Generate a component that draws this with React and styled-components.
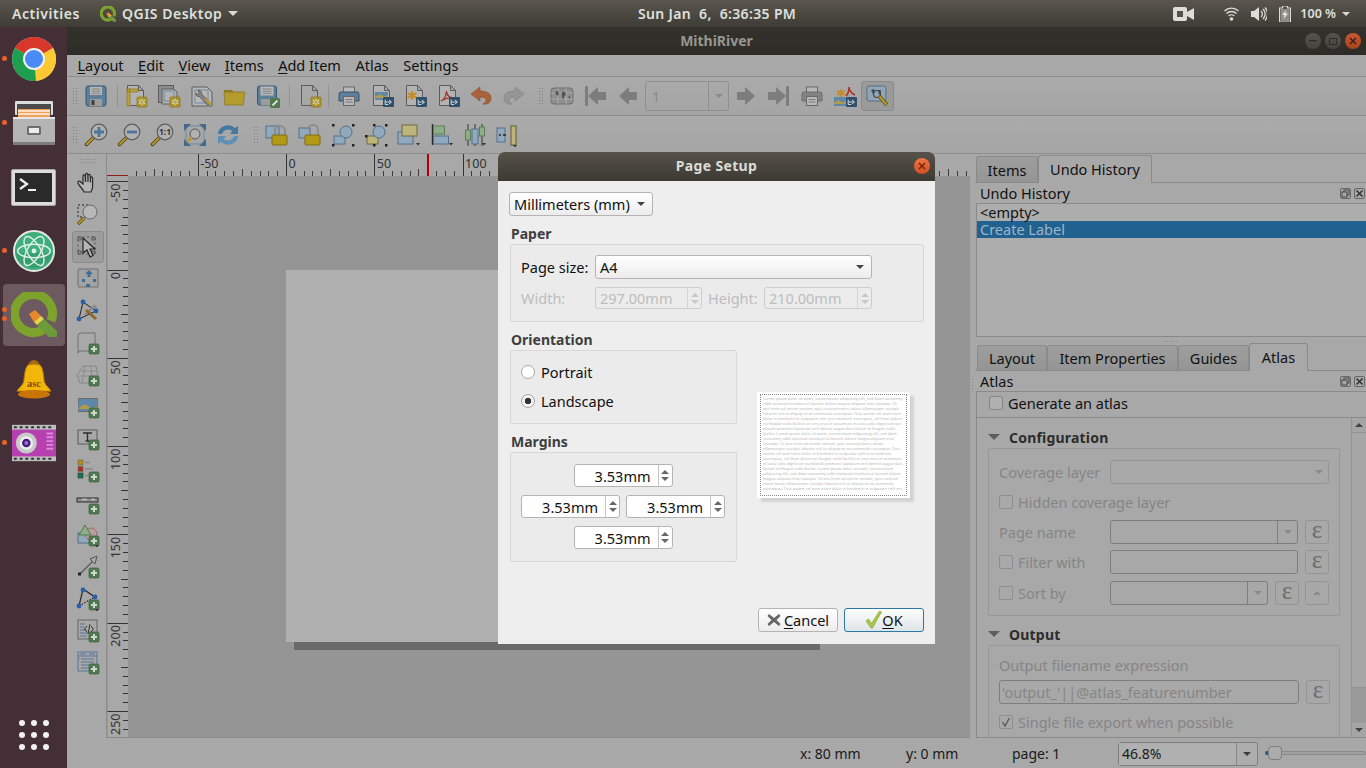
import React from 'react';
import styled, { createGlobalStyle } from 'styled-components';

const Global = createGlobalStyle`
  html, body { margin: 0; padding: 0; width: 1366px; height: 768px; overflow: hidden; background: #452f37; }
  * { box-sizing: border-box; }
  body { font-family: "Noto Sans", "DejaVu Sans", sans-serif; font-size: 14px; }
`;

const Desktop = styled.div`position: relative; width: 1366px; height: 768px; overflow: hidden; display: flex; flex-direction: column;`;

/* ---------- gnome top bar ---------- */
const TopBar = styled.header`
  height: 27px; flex: none; display: grid; grid-template-columns: 638px auto 1fr; align-items: center;
  background: linear-gradient(#5a564e, #3e3c36); color: #dfe0de; font-size: 14px; font-weight: 600; letter-spacing: .35px;
`;
const TopLeft = styled.div`display: flex; align-items: center; padding-left: 12px;`;
const Activities = styled.span`width: 88px; letter-spacing: .55px;`;
const AppName = styled.span`margin-left: 6px; letter-spacing: .5px;`;
const TopRight = styled.div`display: flex; align-items: center; justify-content: flex-end; padding-right: 16px;`;
const BatteryText = styled.span`font-size: 12.5px; letter-spacing: 0;`;
const Caret = styled.i`
  display: inline-block; width: 0; height: 0; flex: none;
  border-left: ${p => p.$s || 4}px solid transparent; border-right: ${p => p.$s || 4}px solid transparent;
  border-top: ${p => p.$s || 4}px solid ${p => p.$c || '#444'};
  margin-left: ${p => p.$ml || 0}px;
`;
const UpCaret = styled(Caret)`border-top: 0; border-bottom: ${p => p.$s || 4}px solid ${p => p.$c || '#444'};`;

/* ---------- dock ---------- */
const Row = styled.div`flex: 1; display: flex; min-height: 0;`;
const Dock = styled.nav`width: 67px; flex: none; background: #452f37; display: flex; flex-direction: column; position: relative;`;
const DockItem = styled.div`height: 64px; flex: none; display: flex; align-items: center; justify-content: center; position: relative;`;
const ActiveTile = styled.div`width: 62px; height: 62px; border-radius: 4px; background: #6c5a60; display: flex; align-items: center; justify-content: center;`;
const RunDot = styled.b`position: absolute; left: 2px; width: 5px; height: 5px; border-radius: 50%; background: #e8622c; top: ${p => p.$t}px;`;
const AppsGrid = styled.div`margin-top: auto; margin-bottom: 18px; align-self: center; display: grid; grid-template-columns: repeat(3, 6px); gap: 6px;`;
const AppsDot = styled.span`width: 6px; height: 6px; border-radius: 50%; background: #f4f2f2;`;

/* ---------- window ---------- */
const Window = styled.main`flex: 1; display: flex; flex-direction: column; min-width: 0; background: #a8a8a8; color: #1a1a1a;`;
const TitleBar = styled.div`
  height: 28px; flex: none; background: linear-gradient(#33312c, #2e2c27); position: relative; padding-bottom: 2px;
  display: flex; align-items: center; justify-content: center; color: #97968f; font-weight: 700; font-size: 14px;
`;
const WinControls = styled.div`position: absolute; right: 5px; top: 6px; display: flex; gap: 4px;`;
const WinBtn = styled.span`
  width: 16px; height: 16px; border-radius: 50%; display: flex; align-items: center; justify-content: center;
  background: ${p => p.$close ? 'linear-gradient(#c8572e,#a8431f)' : 'linear-gradient(#55534d,#45433e)'};
`;
const MenuBar = styled.div`height: 22px; flex: none; display: flex; align-items: center; padding-left: 10.5px; gap: 14.5px; border-bottom: 1px solid #8d8d8d; font-size: 14.5px; color: #111; padding-bottom: 1px;`;
const MenuItem = styled.span``;
const U = styled.span`text-decoration: underline; text-underline-offset: 2px;`;
const ToolBar = styled.div`height: ${p => p.$h}px; flex: none; display: flex; align-items: center; padding-left: 5px; border-bottom: 1px solid #8d8d8d; background: linear-gradient(#aaa, #a5a5a5);`;
const Grip = styled.div`width: 5px; height: 18px; margin: 0 ${p => p.$mr ?? 2.5}px 0 ${p => p.$ml || 0}px; flex: none; background-image: radial-gradient(#7f7f7f 0.7px, transparent 0.8px); background-size: 3px 3px;`;
const Sep = styled.div`width: 1px; height: 22px; background: #929292; margin: 0 ${p => p.$r}px 0 ${p => p.$l}px; flex: none;`;
const ToolBtn = styled.div`
  width: 33px; height: ${p => p.$active ? 30 : 33}px; flex: none; display: flex; align-items: center; justify-content: center;
  ${p => p.$active ? 'border: 1px solid #8a8a8a; border-radius: 3px; background: #9a9a9a;' : ''}
`;
const PageCombo = styled.div`width: 84px; height: 30px; flex: none; margin-left: 1px; display: flex; border: 1px solid #8f8f8f; border-radius: 3px; color: #8a8a8a; font-size: 14px; align-items: center;`;
const PageComboText = styled.span`flex: 1; padding-left: 6px; height: 100%; display: flex; align-items: center; border-right: 1px solid #8f8f8f;`;
const PageComboArrow = styled.span`width: 19px; display: flex; justify-content: center;`;

const Main = styled.div`flex: 1; display: flex; min-height: 0;`;
const ToolColumn = styled.aside`width: 40px; flex: none; border-right: 1px solid #8c8c8c; display: flex; flex-direction: column; align-items: center; padding: 4px 0 0 2px;`;
const GripH = styled.div`width: 18px; height: 5px; margin-bottom: 4px; flex: none; background-image: radial-gradient(#7f7f7f 0.7px, transparent 0.8px); background-size: 3px 3px;`;
const ColBtn = styled.div`
  width: 32px; height: 32px; flex: none; display: flex; align-items: center; justify-content: center;
  ${p => p.$active ? 'border: 1px solid #8a8a8a; border-radius: 3px; background: #9c9c9c;' : ''}
`;
const CanvasArea = styled.section`width: 863px; flex: none; display: flex; flex-direction: column; border-bottom: 1px solid #8c8c8c;`;
const RulerRow = styled.div`height: 22px; flex: none; display: block; line-height: 0;`;
const CanvasRow = styled.div`flex: 1; display: flex; min-height: 0;`;
const VRulerBox = styled.div`width: 21px; flex: none; line-height: 0;`;
const View = styled.div`flex: 1; background: #959595; position: relative; overflow: hidden;`;
const Paper = styled.div`position: absolute; left: 158px; top: 94px; width: 526px; height: 372px; background: #b0b0b0; box-shadow: 8px 8px 0 #6a6a6a;`;
const Splitter = styled.div`width: 5px; flex: none; display: flex; align-items: center; justify-content: center;`;
const GripV = styled.div`width: 3px; height: 16px; margin-top: -120px; background-image: radial-gradient(#878787 0.6px, transparent 0.7px); background-size: 3px 3px;`;

/* ---------- right panel ---------- */
const RightPanel = styled.aside`width: 391px; flex: none; display: flex; flex-direction: column; font-size: 14.5px; color: #111;`;
const TabBar = styled.div`height: ${p => p.$h}px; flex: none; display: flex; align-items: flex-end; padding-left: ${p => p.$pl}px; border-bottom: 1px solid #8a8a8a;`;
const Tab = styled.div`
  height: ${p => p.$active ? p.$h + 2 : p.$h}px; width: ${p => p.$w}px; flex: none; display: flex; align-items: center; justify-content: center;
  border: 1px solid #8a8a8a; border-bottom: 0; border-radius: 3px 3px 0 0;
  background: ${p => p.$active ? '#a8a8a8' : 'linear-gradient(#9e9e9e,#959595)'};
  margin-bottom: ${p => p.$active ? -1 : 0}px; padding-bottom: ${p => p.$active ? 2 : 0}px;
  position: relative;
`;
const DockTitle = styled.div`height: 20px; flex: none; display: flex; align-items: center; padding: 0 1px 0 5px; justify-content: space-between;`;
const DockBtns = styled.div`display: flex; gap: 3px;`;
const DockBtn = styled.span`width: 11px; height: 11px; border: 1px solid #666; border-radius: 2px; display: flex; align-items: center; justify-content: center; line-height: 0;`;
const ListBox = styled.div`height: 134px; flex: none; margin-left: 1px; border: 1px solid #8a8a8a; border-right: 0; background: #adadad; font-size: 14.5px; line-height: 17px;`;
const ListRow = styled.div`height: 17px; padding-left: 3px; ${p => p.$sel ? 'background: #21618f; color: #9db5c7;' : ''}`;
const HSplit = styled.div`height: 8px; flex: none; display: flex; justify-content: center; align-items: center;`;
const GripTiny = styled.div`width: 16px; height: 3px; background-image: radial-gradient(#878787 0.6px, transparent 0.7px); background-size: 3px 3px;`;
const AtlasBox = styled.div`flex: 1; min-height: 0; margin-left: 1px; border: 1px solid #8a8a8a; display: flex; flex-direction: column; border-right: 0;`;
const GenRow = styled.div`height: 26px; flex: none; display: flex; align-items: center; padding: 0 0 3px 12px; gap: 5px; border-bottom: 1px solid #8a8a8a; font-size: 14.5px;`;
const Check = styled.span`width: 14px; height: 14px; flex: none; border: 1px solid ${p => p.$dis ? '#8f8f8f' : '#868686'}; border-radius: 2px; background: ${p => p.$dis ? 'transparent' : '#b0b0b0'}; display: flex; align-items: center; justify-content: center; line-height: 0;`;
const ScrollRow = styled.div`flex: 1; display: flex; min-height: 0; overflow: hidden;`;
const ScrollContent = styled.div`flex: 1; padding: 9px 11px 0 11px; min-width: 0; overflow: hidden; display: flex; flex-direction: column;`;
const ScrollBar = styled.div`width: 15px; flex: none; border-left: 1px solid #939393; display: flex; flex-direction: column; background: #9a9a9a;`;
const ScrollArrow = styled.div`height: 14px; flex: none; display: flex; align-items: center; justify-content: center; background: #a5a5a5;`;
const ScrollThumb = styled.div`height: 256px; flex: none; background: #a6a6a6; border-top: 1px solid #959595; border-bottom: 1px solid #959595;`;
const ScrollTrack = styled.div`flex: 1;`;
const CollapseHead = styled.div`height: 20px; flex: none; display: flex; align-items: center; gap: 9px; font-weight: 700; color: #2c2c2c; font-size: 14px; letter-spacing: .2px;`;
const CollapseGroup = styled.div`
  flex: none; border: 1px solid #979797; border-radius: 2px; padding: ${p => p.$pt ?? 11}px 10px 0 10px; margin: 1px 0 8px 0;
  height: ${p => p.$h}px; display: flex; flex-direction: column; gap: 7px; color: #858585;
`;
const FormRow = styled.div`height: ${p => p.$h || 23}px; flex: none; display: flex; align-items: center; margin-top: ${p => p.$mt || 0}px;`;
const RowLabel = styled.span`width: ${p => p.$w || 111}px; flex: none; display: flex; align-items: center; gap: 5px;`;
const DisCombo = styled.div`
  width: ${p => p.$w}px; height: 24px; flex: none; display: flex; align-items: center; border: 1px solid ${p => p.$dark ? '#7e7e7e' : '#949494'}; border-radius: 3px;
`;
const DisComboFill = styled.div`flex: 1; height: 100%; ${p => p.$line ? 'border-right: 1px solid #7e7e7e;' : ''} padding-left: 2px; display: flex; align-items: center; color: #858585;`;
const DisComboArrow = styled.div`width: 19px; display: flex; justify-content: center; flex: none;`;
const EpsBtn = styled.div`
  width: 24px; height: 24px; flex: none; margin-left: ${p => p.$ml ?? 7}px; border: 1px solid #949494; border-radius: 3px; display: flex; align-items: center; justify-content: center;
  font-family: "Liberation Serif", serif; font-size: 25px; color: #6e6e6e; line-height: 1; padding-bottom: 5px;
`;
const UpBtn = styled(EpsBtn)`padding-bottom: 0; font-size: 14px;`;

/* ---------- status bar ---------- */
const StatusBar = styled.footer`height: 30px; flex: none; display: flex; align-items: center; font-size: 14px; color: #1a1a1a;`;
const StatusText = styled.span`width: ${p => p.$w}px; flex: none; padding-left: ${p => p.$pl || 0}px;`;
const ZoomCombo = styled.div`width: 140px; height: 24px; flex: none; display: flex; border: 1px solid #7e7e7e; border-radius: 3px; background: #adadad; align-items: center; margin-top: 1px;`;
const ZoomText = styled.span`flex: 1; padding-left: 3px; height: 100%; display: flex; align-items: center; background: #b0b0b0; border-right: 1px solid #8a8a8a;`;
const ZoomArrow = styled.span`width: 20px; display: flex; justify-content: center; `;
const Slider = styled.div`flex: 1; height: 16px; margin-left: 7px; position: relative; display: flex; align-items: center;`;
const SliderTrack = styled.div`width: 100%; height: 4px; border: 1px solid #8a8a8a; border-radius: 2px; background: #a0a0a0;`;
const SliderKnob = styled.div`position: absolute; left: 3px; top: 1px; width: 14px; height: 14px; border: 1px solid #7d7d7d; border-radius: 4px; background: #acacac;`;
const SliderFill = styled.div`position: absolute; left: 0; top: 6px; width: 4px; height: 4px; border-radius: 2px; background: #21618f;`;

/* ---------- dialog ---------- */
const Dialog = styled.div`
  position: absolute; left: 498px; top: 152px; width: 437px; height: 492px; background: #eeeeee; border-radius: 6px 6px 0 0;
  display: flex; flex-direction: column; font-size: 14.5px; color: #111; overflow: hidden;
`;
const DialogTitle = styled.div`
  height: 29px; flex: none; position: relative; display: flex; align-items: center; justify-content: center; padding-bottom: 2px;
  background: linear-gradient(#56524a, #3c3a33); color: #dcdbd6; font-weight: 700; font-size: 14px; letter-spacing: .35px;
`;
const DialogClose = styled.span`position: absolute; right: 5px; top: 6px; width: 16px; height: 16px; border-radius: 50%; background: linear-gradient(#ef7443,#d04f22); display: flex; align-items: center; justify-content: center;`;
const DialogBody = styled.div`flex: 1; padding: 11px 11px 12px 11px; display: flex; flex-direction: column; min-height: 0; position: relative;`;
const LightCombo = styled.div`
  width: ${p => p.$w}px; height: 24px; flex: none; display: flex; align-items: center; justify-content: space-between;
  padding: 0 7px 0 4px; border: 1px solid #b4b4b4; border-radius: 3px; background: linear-gradient(#ffffff, #ececec);
`;
const SecTitle = styled.div`height: 18px; margin: ${p => p.$mt}px 0 0 2px; flex: none; font-weight: 700; font-size: 14px; color: #3e3e3e; line-height: 18px;`;
const GroupBox = styled.div`border: 1px solid #d8d8d8; border-radius: 2px; height: ${p => p.$h}px; width: ${p => p.$w}px; margin: 1px 0 0 1px; flex: none; background: #ebebeb; padding: ${p => p.$pad};`;
const PaperRow = styled.div`display: flex; align-items: center; height: ${p => p.$h}px; margin-bottom: ${p => p.$mb || 0}px;`;
const PLabel = styled.span`width: ${p => p.$w}px; flex: none; padding-left: ${p => p.$pl || 0}px; color: ${p => p.$dis ? '#bdbdbd' : '#111'};`;
const Spin = styled.div`
  width: ${p => p.$w}px; height: ${p => p.$h || 23}px; flex: none; display: flex; border: 1px solid ${p => p.$dis ? '#cdcdcd' : '#b4b4b4'}; border-radius: 3px; background: ${p => p.$dis ? '#ececec' : '#fff'};
  color: ${p => p.$dis ? '#bdbdbd' : '#111'}; align-items: center;
`;
const SpinText = styled.span`flex: 1; padding: 0 7px 0 4px; height: 100%; display: flex; align-items: center; justify-content: ${p => p.$left ? 'flex-start' : 'flex-end'}; border-right: 1px solid ${p => p.$dis ? '#d4d4d4' : '#c4c4c4'};`;
const SpinBtns = styled.span`width: 13px; display: flex; flex-direction: column; align-items: center; justify-content: center; gap: 3px; flex: none;`;
const MiddleSplit = styled.div`display: flex; justify-content: space-between; flex: none;`;
const LeftCol = styled.div`display: flex; flex-direction: column; width: 228px;`;
const RadioRow = styled.div`height: 29px; display: flex; align-items: center; gap: 6px;`;
const Radio = styled.span`width: 14px; height: 14px; border-radius: 50%; border: 1px solid #a8a8a8; background: ${p => p.$on ? 'radial-gradient(#333 3px, #f4f4f4 3.5px)' : '#fff'}; flex: none;`;
const MarginRow = styled.div`display: flex; justify-content: center; gap: 6px; margin-bottom: 8px;`;
const PreviewWrap = styled.div`width: 153px; height: 106px; margin: 70px 14px 0 0; flex: none; background: #fff; box-shadow: 4px 4px 2px #d2d2d2; padding: 2px 3px; `;
const PreviewInner = styled.div`width: 100%; height: 100%; border: 1px dotted #888; overflow: hidden; padding: 1px 2px; font-size: 3.8px; line-height: 5px; color: #c2c2c2; font-weight: 500;`;
const DialogButtons = styled.div`position: absolute; right: 11px; bottom: 12px; display: flex; gap: 6px;`;
const PushBtn = styled.div`
  width: 80px; height: 24px; display: flex; align-items: center; justify-content: center; gap: ${p => p.$def ? 0 : 3}px; border-radius: 3px;
  border: 1px solid ${p => p.$def ? '#2a7aa8' : '#b4b4b4'};
  background: ${p => p.$def ? 'linear-gradient(#fdfdfd,#dfe4e8)' : 'linear-gradient(#ffffff,#ececec)'};
`;

/* ---------- icon drawing ---------- */
const Ico = ({ children, s = 24, vb = 24 }) => (
  <svg width={s} height={s} viewBox={`0 0 ${vb} ${vb}`} style={{ display: 'block' }} aria-hidden="true">{children}</svg>
);
const Gear = ({ x = 13, y = 13 }) => (
  <g transform={`translate(${x} ${y})`}>
    <rect width="10" height="10" rx="1" fill="#ad9526" stroke="#7e6d1c" strokeWidth=".6" />
    <path d="M5 1.5v7M1.8 3.2l6.4 3.6M8.2 3.2L1.8 6.8" stroke="#d8d8c8" strokeWidth="1.1" />
    <circle cx="5" cy="5" r="1.1" fill="#ad9526" />
  </g>
);
const Sheet = () => <path d="M3.5 1.5h11l5 5v15h-16z M14.5 1.5v5h5" fill="#b3b3b3" stroke="#5c5c5c" strokeWidth="1" />;
const ExportBadge = () => (
  <g transform="translate(13 13)">
    <rect width="11" height="10" rx="1" fill="#2f5068" />
    <path d="M2.2 2.5v5h3M2.2 5h2.5M6 3l2.5 2L6 7M8 5H4.5" fill="none" stroke="#d0d6da" strokeWidth="1" />
  </g>
);
const Magnifier = ({ children }) => (
  <>
    <path d="M10 14L2.500 21.500" stroke="#4a3d0c" strokeWidth="3.400" strokeLinecap="round" />
    <path d="M9 15L2.800 21.200" stroke="#b69a2d" strokeWidth="2" strokeLinecap="round" />
    <circle cx="15" cy="9" r="7.800" fill="#b1b1b1" stroke="#5e5e5e" strokeWidth="1.200" />
    {children}
  </>
);
const Plus = ({ x = 13, y = 13 }) => (
  <g transform={`translate(${x} ${y})`}>
    <rect width="10" height="10" rx="1.5" fill="#4f7a50" stroke="#3a5c3b" strokeWidth=".7" />
    <path d="M5 2v6M2 5h6" stroke="#cfd6cc" strokeWidth="2" />
  </g>
);
const Drop = ({ x = 21, y = 22 }) => <path d={`M${x} ${y}h4l-2 2.4z`} fill="#333" />;

const PrinterShape = ({ col = '#5e7f9c', dk = '#36526c' }) => (
  <>
    <rect x="6.5" y="3" width="11" height="6" fill="#b8b8b8" stroke="#6a6a6a" />
    <path d="M2 10a2 2 0 0 1 2-2h16a2 2 0 0 1 2 2v7H2z" fill={col} stroke={dk} />
    <rect x="6.5" y="12.5" width="11" height="9" fill="#b8b8b8" stroke="#6a6a6a" />
    <path d="M8.5 15.5h7M8.5 18h7" stroke="#7a7a7a" />
  </>
);
const Landscape = ({ x = 5, y = 9, w = 12, h = 9 }) => (
  <g>
    <rect x={x} y={y} width={w} height={h} fill="#5f87a8" />
    <path d={`M${x} ${y + h - 3}q${w / 3} -${h / 2} ${w / 2} -2t${w / 2} 0v3h-${w}z`} fill="#b09a52" />
  </g>
);

const icons = {
  save: <><rect x="2" y="2" width="20" height="20" rx="2" fill="#5c7f9c" stroke="#3a566f" /><rect x="5.5" y="2.5" width="13" height="9" fill="#b8b8b8" stroke="#55708a" strokeWidth=".7" /><path d="M7.5 5h9M7.5 7.2h9M7.5 9.3h9" stroke="#777" strokeWidth=".8" /><rect x="6" y="15" width="12" height="7" fill="#9c9c9c" /><rect x="7.5" y="16" width="3" height="5" fill="#3f3f3f" /></>,
  newLayout: <><Sheet /><path d="M3 5h3v17H3zM3 5h11v3H3z" fill="#b9a53a" stroke="#8a7a24" strokeWidth=".7" /><Gear /></>,
  dup: <><rect x="1.5" y="1.5" width="15" height="17" fill="#8d8d8d" stroke="#5c5c5c" /><path d="M5 5h12l3 3v12H5z" fill="#b3b3b3" stroke="#5c5c5c" /><rect x="7" y="7" width="10" height="10" fill="none" stroke="#6d8aa3" /><Gear /></>,
  manager: <><path d="M2 3h15l5 5v14H2z" fill="#b8b8b8" stroke="#5c5c5c" /><rect x="5" y="6" width="13" height="13" fill="none" stroke="#7089a1" /><path d="M8 6.5a3 3 0 0 1 3.6 3.6L18 16.5l2 2.5-2 2-2.6-2-6-6.4A3 3 0 0 1 6 9.2l2 1.6 1.4-1.4z" fill="#888" stroke="#444" strokeWidth=".7" /><path d="M16 15l5 6" stroke="#b69a2d" strokeWidth="2.4" /></>,
  open: <><path d="M1 6h8l2 2h10v3H1z" fill="#8d7a22" /><path d="M1 8h21l-2 13H2z" fill="#b39b2e" stroke="#8a7a24" strokeWidth=".8" /></>,
  saveAs: <><rect x="1.5" y="2" width="19" height="19" rx="2" fill="#5c7f9c" stroke="#3a566f" /><rect x="4.5" y="2.5" width="13" height="9" fill="#b8b8b8" /><path d="M6.5 5h9M6.5 7.2h9M6.5 9.3h9" stroke="#777" strokeWidth=".8" /><rect x="5" y="15" width="9" height="6" fill="#9c9c9c" /><rect x="14" y="14" width="10" height="10" rx="1.5" fill="#4f7a50" /><path d="M16.5 21.5l5-5" stroke="#ddd" strokeWidth="1.8" /></>,
  page: <><path d="M3.5 1.5h11l5 5v15h-16z M14.5 1.5v5h5" fill="#a8a8a8" stroke="#5c5c5c" /><Gear /></>,
  print: <PrinterShape />,
  expImg: <><Sheet /><Landscape x={5} y={8} w={13} h={8} /><ExportBadge /></>,
  expSvg: <><Sheet /><path d="M9 7v9M4.6 9.2l8.8 4.6M13.4 9.2l-8.8 4.6" stroke="#c98a22" strokeWidth="1.9" /><ExportBadge /></>,
  expPdf: <><Sheet /><path d="M5 17c3-1 5-5 5.5-10 0 3 2 6 6 7-3-.3-8 .7-11.500 3z" fill="none" stroke="#a8362a" strokeWidth="1.4" /><ExportBadge /></>,
  undo: <><path d="M11 3L2 10l9 7v-4c4 0 6 1 6 3s-2 3-3 4c5 1 8-2 8-6 0-5-5-7-11-7z" fill="#a9623a" stroke="#8a4c2a" strokeWidth=".6" /></>,
  redo: <><path d="M13 3l9 7-9 7v-4c-4 0-6 1-6 3s2 3 3 4c-5 1-8-2-8-6 0-5 5-7 11-7z" fill="#959595" stroke="#808080" strokeWidth=".6" /></>,
  atlas: <><rect x="1" y="4" width="22" height="16" rx="3" fill="#8f8f8f" stroke="#6e6e6e" /><path d="M1 9h22M1 15h22M8 4v16M16 4v16" stroke="#a9a9a9" /><path d="M5 8l3-1 1 3-2 2zM12 8h3l1 2-2 3-1 3-1-3zM18 13l2-1v3z" fill="#555" /></>,
  first: <><rect x="2" y="2" width="3" height="20" rx="1" fill="#7d7d7d" /><path d="M5 12l10-9v5h8v8h-8v5z" fill="#7d7d7d" /></>,
  prev: <path d="M3 12l10-9v5h8v8h-8v5z" fill="#7d7d7d" />,
  next: <path d="M21 12L11 3v5H3v8h8v5z" fill="#7d7d7d" />,
  last: <><rect x="19" y="2" width="3" height="20" rx="1" fill="#7d7d7d" /><path d="M19 12L9 3v5H1v8h8v5z" fill="#7d7d7d" /></>,
  printGray: <PrinterShape col="#838383" dk="#6d6d6d" />,
  expAtlas: <><path d="M8 5v8M4 7l8 4M12 7l-8 4" stroke="#c98a22" strokeWidth="1.8" /><path d="M13 12c2-2 3-6 3-9 0 3 2 6 6 8" fill="none" stroke="#a8362a" strokeWidth="1.6" /><Landscape x={1} y={13} w={12} h={9} /><ExportBadge /></>,
  atlasSet: <><rect x="1" y="2" width="19" height="15" rx="2" fill="#90a6b7" stroke="#556f86" /><path d="M5 6l3-1 1 3-2 2zM12 6h3l-1 4-1 1z" fill="#3f4e5b" /><circle cx="11" cy="10" r="3.5" fill="none" stroke="#444" strokeWidth="1.2" /><path d="M13 12l8 9" stroke="#5a4a10" strokeWidth="3.6" /><path d="M13.400 12.400l7.500 8.500" stroke="#b69a2d" strokeWidth="2.200" /></>,
  zoomIn: <Magnifier><path d="M15 4v10M10 9h10" stroke="#4e7597" strokeWidth="2.800" /></Magnifier>,
  zoomOut: <Magnifier><path d="M10 9h10" stroke="#4e7597" strokeWidth="2.800" /></Magnifier>,
  zoom11: <Magnifier><text x="15" y="12" fontSize="8.500" fontWeight="700" textAnchor="middle" fill="#333" fontFamily="Noto Sans">1:1</text></Magnifier>,
  zoomFull: <><rect x="3" y="3" width="18" height="18" fill="none" stroke="#6d8aa3" /><path d="M1 1h7L1 8zM23 1v7l-7-7zM1 23v-7l7 7zM23 23h-7l7-7z" fill="#44698a" /><circle cx="12" cy="11" r="5" fill="#b1b1b1" stroke="#555" /><path d="M9 14l-5 5" stroke="#b69a2d" strokeWidth="2.400" /></>,
  refresh: <><path d="M2 11a10 9 0 0 1 17-6l3-2v8h-8l2.500-3A6.500 6 0 0 0 6 11z" fill="#44789f" /><path d="M22 13a10 9 0 0 1-17 6l-3 2v-8h8l-2.500 3A6.500 6 0 0 0 18 13z" fill="#5f8fb5" /></>,
  lock: <><rect x="1" y="3" width="13" height="12" fill="#91a9bd" stroke="#55708a" /><path d="M10 12V8a5 5 0 0 1 10 0v4" fill="none" stroke="#8c8c8c" strokeWidth="2" /><rect x="7" y="12" width="15" height="10" rx="1" fill="#b29a16" stroke="#7e6d1c" /></>,
  unlock: <><rect x="1" y="5" width="11" height="10" fill="#91a9bd" stroke="#55708a" /><path d="M10 7a5 5 0 0 1 10 0v5" fill="none" stroke="#8c8c8c" strokeWidth="2" /><rect x="7" y="12" width="15" height="10" rx="1" fill="#b29a16" stroke="#7e6d1c" /></>,
  select: <><rect x="3" y="13" width="11" height="8" fill="#91a9bd" stroke="#55708a" /><circle cx="15" cy="9" r="6" fill="#91a9bd" stroke="#55708a" /><path d="M1 1h2.500v2.500H1zM21 1h2.500v2.500H21zM1 21h2.500v2.500H1zM21 21h2.500v2.500H21z" fill="#222" /></>,
  select2: <><rect x="3" y="13" width="11" height="8" fill="#bcb67e" stroke="#6e6a3a" /><circle cx="15" cy="9" r="6" fill="#91a9bd" stroke="#55708a" /><path d="M9 1h2.500v2.500H9zM21 1h2.500v2.500H21zM1 12h2.500v2.500H1zM21 21h2.500v2.500H21zM9 21h2.500v2.500H9z" fill="#222" /></>,
  raise: <><rect x="1" y="9" width="15" height="12" fill="#91a9bd" stroke="#55708a" /><rect x="5" y="2" width="15" height="11" fill="#bcb67e" stroke="#6e6a3a" /><Drop x={19} y={20} /></>,
  align: <><path d="M2.500 1v21" stroke="#2a2a2a" strokeWidth="1.400" /><rect x="3.500" y="3" width="11" height="8" fill="#8fae87" stroke="#5d7f58" /><rect x="3.500" y="13" width="15" height="8" fill="#91a9bd" stroke="#55708a" /><Drop x={19} y={20} /></>,
  distrib: <><path d="M5 1v22M12 1v22M19 1v22" stroke="#333" strokeWidth="1" /><rect x="2.500" y="7" width="5" height="10" fill="#8fae87" stroke="#5d7f58" /><rect x="9" y="6" width="6" height="15" fill="#91a9bd" stroke="#55708a" /><rect x="16.500" y="4" width="5" height="9" fill="#8fae87" stroke="#5d7f58" /><Drop x={19} y={20} /></>,
  resize: <><rect x="1" y="5" width="8" height="14" fill="#91a9bd" stroke="#55708a" /><path d="M10 12h-3M5 12H3" stroke="#222" strokeWidth="1.600" /><rect x="15" y="3" width="5" height="19" fill="#bcb67e" stroke="#5f5b2e" /><Drop x={17} y={22} /></>,
  hand: <path d="M8 21c-1-3-5-6-6-9-.5-1.500 1-2.500 2.200-1.500L7 13V5c0-1.500 2-1.500 2.200 0l.3 6V3.500c0-1.500 2.200-1.500 2.300 0L12 11V4.500c0-1.500 2.200-1.500 2.300 0l.2 7V7c0-1.500 2-1.500 2.100 0v9c0 2-1 3-1.600 5z" fill="#b5b5b5" stroke="#2b2b2b" strokeWidth="1.200" />,
  zoomTool: <><rect x="2" y="2" width="12" height="12" fill="none" stroke="#222" strokeDasharray="2 2" /><circle cx="14" cy="9" r="7" fill="#b8b8b8" stroke="#6a6a6a" /><path d="M8 15l-6 6" stroke="#5a4a10" strokeWidth="3.200" /><path d="M8 15l-5.700 5.700" stroke="#b69a2d" strokeWidth="1.800" /></>,
  selectTool: <><rect x="2" y="2" width="17" height="17" fill="none" stroke="#555" strokeDasharray="2 2.500" /><path d="M2 2h3v3H2zM16 2h3v3h-3zM2 16h3v3H2zM16 16h3v3h-3z" fill="none" stroke="#555" /><path d="M7 3l0 15 4-3 3 7 3-1.500-3-6.500h5z" fill="#b5b5b5" stroke="#222" strokeWidth="1.200" /></>,
  moveContent: <><path d="M2 4q0-3 3-2h17v18H5q-3 1-3-2z" fill="#a3a3a3" stroke="#707070" /><path d="M13 3l4 4h-2.500v3h-3V7H9z" fill="#3f6d96" /><path d="M6 12h3v3H6zM17 12h3v3h-3zM10 17h4v3h-4z" fill="#3f6d96" /></>,
  editNodes: <><path d="M7 3L3 20l17-8z" fill="none" stroke="#222" strokeWidth="1" /><path d="M9 16l9-9" stroke="#8a8a8a" strokeWidth="2.400" /><path d="M10 11l10 9" stroke="#8a6a2c" strokeWidth="3" /><path d="M17 6a3 3 0 0 1 4 3l-3 1-2-2z" fill="#8e8e8e" /><circle cx="7" cy="3" r="2.400" fill="#2a5ea8" /><circle cx="3" cy="20" r="2.400" fill="#2a5ea8" /><circle cx="20" cy="12" r="2.400" fill="#2a5ea8" /></>,
  addMap: <><path d="M2 5q0-3 3-3h14v18H5q-3 0-3 2z" fill="#a8a8a8" stroke="#707070" /><Plus /></>,
  add3d: <><path d="M7 3h13l2 10-6 7H4L1 12z" fill="#a9a9a9" stroke="#868686" /><path d="M5 8h16M3 13h18M9 3l-3 17M15 3l1 17" stroke="#8b8b8b" /><Plus /></>,
  addPic: <><rect x="2" y="3" width="20" height="14" fill="#6a6a6a" /><Landscape x={2.500} y={4} w={19} h={12} /><Plus /></>,
  addLabel: <><rect x="2" y="3" width="19" height="14" fill="#a8a8a8" stroke="#5c5c5c" /><path d="M7 6h9M11.500 6v8M9.500 14h4" stroke="#2c2c2c" strokeWidth="1.400" /><Plus /></>,
  addLegend: <><rect x="2" y="1" width="5" height="5" fill="#b58a10" stroke="#666" strokeWidth=".6" /><rect x="2" y="7.500" width="5" height="5" fill="#a8321a" stroke="#666" strokeWidth=".6" /><rect x="2" y="14" width="5" height="5" fill="#10784a" stroke="#333" strokeWidth=".6" /><path d="M9 3.500h5M9 10h8M9 16.500h3" stroke="#888" strokeWidth="1.600" /><Plus /></>,
  addScale: <><rect x="1" y="7" width="21" height="4" fill="#909090" stroke="#2c2c2c" /><path d="M6 8.500h5M15 8.500h4" stroke="#c4c4c4" strokeWidth="1.500" /><Plus /></>,
  addShape: <><rect x="2" y="10" width="14" height="10" fill="#91a9bd" stroke="#55708a" /><circle cx="15" cy="11" r="6" fill="#b89c9c" stroke="#a06a6a" /><path d="M9 2l6 10H3z" fill="#8fae87" stroke="#4f7a50" /><Plus /><Drop x={19} y={22} /></>,
  addArrow: <><path d="M4 19L19 4" stroke="#555" strokeWidth="1.200" /><rect x="2" y="17.500" width="3" height="3" fill="#222" /><path d="M21 1l-2 8-5-5z" fill="#aaa" stroke="#555" /><Plus /></>,
  addNode: <><path d="M7 2L3 19" stroke="#222" strokeWidth="1.100" /><path d="M7 2l12 8" stroke="#222" strokeWidth="1.100" /><path d="M3 19l16-9" stroke="#222" strokeWidth="1.100" strokeDasharray="1.500 1.500" /><circle cx="7" cy="3" r="2.400" fill="#2a5ea8" /><circle cx="3" cy="19" r="2.400" fill="#2a5ea8" /><circle cx="19" cy="10" r="2.400" fill="#2a5ea8" /><Plus /><Drop x={19} y={22} /></>,
  addHtml: <><rect x="2" y="1" width="19" height="19" fill="#a8a8a8" stroke="#666" /><path d="M4 5h5M4 8h4M4 11h6M4 14h8M4 17h7" stroke="#56779a" strokeWidth="1.200" /><path d="M11 7L8.500 10l2.500 3M15 7l2.500 3-2.500 3M14 5l-2 10" stroke="#333" fill="none" /><Plus /></>,
  addTable: <><rect x="2" y="1" width="19" height="19" fill="#a8a8a8" stroke="#56779a" /><path d="M2 5h19M4 3h6M13 3h6M5 8h13M5 11h13M5 14h9M5 17h9M3 8h1" stroke="#56779a" /><Plus /></>,
};
const I = ({ n, s }) => <Ico s={s}>{icons[n]}</Ico>;

const WinCross = ({ c = '#3a1a10' }) => (
  <svg width="8" height="8" viewBox="0 0 8 8" aria-hidden="true"><path d="M1 1l6 6M7 1L1 7" stroke={c} strokeWidth="1.300" /></svg>
);
const DockBtnFloat = () => <svg width="9" height="9" viewBox="0 0 9 9" aria-hidden="true"><rect x="3" y="1" width="5" height="5" fill="none" stroke="#444" /><rect x="1" y="3" width="5" height="5" fill="#a8a8a8" stroke="#444" /></svg>;
const DockBtnClose = () => <svg width="9" height="9" viewBox="0 0 9 9" aria-hidden="true"><path d="M1.500 1.500l6 6M7.500 1.500l-6 6" stroke="#333" strokeWidth="1.600" /></svg>;

const Chrome = () => (
  <svg width="44" height="44" viewBox="0 0 44 44" aria-hidden="true">
    <circle cx="22" cy="22" r="22" fill="#cfd2d0" />
    <path d="M22 22L3 11A22 22 0 0 1 41 11z" fill="#d8382b" />
    <path d="M22 22L41 11A22 22 0 0 1 24 44z" fill="#fcc934" />
    <path d="M22 22L24 44A22 22 0 0 1 3 11z" fill="#1e9f50" />
    <circle cx="22" cy="22" r="11" fill="#f1f1f1" />
    <circle cx="22" cy="22" r="9" fill="#4a8af4" />
  </svg>
);
const FilesIcon = () => (
  <svg width="42" height="44" viewBox="0 0 42 44" aria-hidden="true">
    <rect x="2" y="0" width="38" height="14" rx="1" fill="#dcdcdc" />
    <rect x="4" y="3" width="34" height="12" fill="#4a4a4a" />
    <rect x="5" y="8" width="32" height="10" fill="#f0a25c" />
    <path d="M5 10h32M5 13h32" stroke="#fdf1e4" strokeWidth="1.300" />
    <rect x="0" y="16" width="42" height="28" rx="2" fill="#b4b4b4" />
    <rect x="0" y="16" width="42" height="2" fill="#e6e6e6" />
    <rect x="0" y="41" width="42" height="3" fill="#7c7c7c" />
    <rect x="14" y="25" width="14" height="9" rx="1.500" fill="#6d6d6d" />
    <rect x="16" y="27" width="10" height="5" fill="#ececec" />
  </svg>
);
const TerminalIcon = () => (
  <svg width="45" height="37" viewBox="0 0 45 37" aria-hidden="true">
    <rect x=".5" y=".5" width="44" height="36" rx="1.500" fill="#dcdcdc" stroke="#a9a9a9" />
    <rect x="4" y="4" width="37" height="29" fill="#2a2a2a" />
    <path d="M9 10l7 5-7 5" fill="none" stroke="#f2f2f2" strokeWidth="2.200" />
    <path d="M17 21h8" stroke="#f2f2f2" strokeWidth="2" />
  </svg>
);
const AtomIcon = () => (
  <svg width="42" height="42" viewBox="0 0 44 44" aria-hidden="true">
    <circle cx="22" cy="22" r="21" fill="#3fae7c" stroke="#e7e7e7" strokeWidth="2" />
    <path d="M2.500 24a20 20 0 0 0 39 0z" fill="#2d8f60" opacity=".45" />
    <g fill="none" stroke="#dff0e6" strokeWidth="1.500">
      <ellipse cx="22" cy="22" rx="17" ry="7" />
      <ellipse cx="22" cy="22" rx="17" ry="7" transform="rotate(60 22 22)" />
      <ellipse cx="22" cy="22" rx="17" ry="7" transform="rotate(120 22 22)" />
    </g>
    <circle cx="22" cy="22" r="2.500" fill="#dff0e6" />
  </svg>
);
const QgisIcon = ({ s = 46 }) => (
  <svg width={s} height={s} viewBox="0 0 46 46" aria-hidden="true">
    <path d="M32 38A19 19 0 1 1 40 29" fill="none" stroke="#7ea32d" strokeWidth="9" />
    <path d="M18 22l6-4 6 6-7 6z" fill="#e8892c" />
    <path d="M23 30l7-6 3 3-7 6z" fill="#e4d64e" />
    <path d="M26 33l7-6 13 12v6h-8z" fill="#6d9a3a" />
  </svg>
);
const BellIcon = () => (
  <svg width="36" height="42" viewBox="0 0 38 42" aria-hidden="true">
    <path d="M19 1a6 6 0 0 0-6 6h12a6 6 0 0 0-6-6z" fill="#a86a10" />
    <path d="M13 6q6-2 12 0c4 3 4 12 5 18 1 4 6 7 7 10H1c1-3 6-6 7-10 1-6 1-15 5-18z" fill="#f2b60a" stroke="#a86a10" />
    <ellipse cx="19" cy="37" rx="17" ry="4.500" fill="#c97408" />
    <text x="19" y="29" fontSize="11" fontWeight="700" textAnchor="middle" fill="#8a4a08" fontFamily="Liberation Serif">asc</text>
  </svg>
);
const VideoIcon = () => (
  <svg width="44" height="38" viewBox="0 0 46 38" aria-hidden="true">
    <rect x="0" y="0" width="46" height="38" fill="#bdbdbd" />
    <rect x="0" y="5" width="46" height="28" fill="#b640b0" />
    <path d="M2 2.500h42M2 35.500h42" stroke="#333" strokeWidth="2" strokeDasharray="3 3" />
    <path d="M36 9h7M36 13h7M36 17h7M36 21h7M36 25h7" stroke="#dc8ad8" strokeWidth="2" />
    <circle cx="15" cy="19" r="11" fill="#c9c9c9" />
    <circle cx="15" cy="19" r="7" fill="#efefef" />
    <circle cx="15" cy="19" r="4.500" fill="#4a1a80" />
    <circle cx="15" cy="19" r="2" fill="#8b7ad4" />
  </svg>
);
const Tray = styled.span`display: flex; align-items: center; line-height: 0; margin-right: ${p => p.$mr}px;`;
const CamIcon = () => <svg width="21" height="14" viewBox="0 0 21 14" aria-hidden="true"><rect width="14" height="14" rx="2" fill="#dcdcd8" /><rect x="4" y="4" width="6" height="6" fill="#55524c" /><path d="M14 5l7-4v12l-7-4z" fill="#dcdcd8" /></svg>;
const WifiIcon = () => <svg width="15" height="15" viewBox="0 0 15 15" aria-hidden="true"><g fill="none" stroke="#dcdcd8" strokeWidth="1.400"><path d="M.5 5a10 10 0 0 1 14 0" /><path d="M2.500 7.500a7.200 7.200 0 0 1 10 0" /><path d="M4.700 10a4 4 0 0 1 5.600 0" /></g><circle cx="7.500" cy="13" r="1.800" fill="#dcdcd8" /></svg>;
const SpeakerIcon = () => <svg width="16" height="14" viewBox="0 0 16 14" aria-hidden="true"><path d="M0 4h3l5-4v14l-5-4H0z" fill="#dcdcd8" /><g fill="none" stroke="#dcdcd8" strokeWidth="1.300"><path d="M10 4a4 4 0 0 1 0 6" /><path d="M12 2a7 7 0 0 1 0 10" /><path d="M14 .5a9.500 9.500 0 0 1 0 13" /></g></svg>;
const BatteryIcon = () => <svg width="12" height="16" viewBox="0 0 12 16" aria-hidden="true"><path d="M3.500 0h5v2h3v14H.5V2h3z" fill="none" stroke="#dcdcd8" strokeWidth="1.200" /><rect x="1.500" y="3" width="9" height="12" fill="#8e8c86" /><path d="M7 4L3 9h2.500L4.500 13 9 7.500H6.300z" fill="#e8e8e4" /></svg>;

/* ---------- rulers ---------- */
const rulerStep = 8.83;
const HRuler = () => {
  const ticks = [];
  for (let i = -20; i < 78; i++) {
    const x = 179.5 + i * rulerStep;
    if (x < 21) continue;
    const major = i % 10 === 0;
    const mid = i % 5 === 0;
    ticks.push(<line key={i} x1={x} x2={x} y1={major ? 0 : mid ? 15 : 17} y2="22" stroke={major ? '#333' : '#3c3c3c'} strokeWidth="1" shapeRendering="crispEdges" />);
  }
  return (
    <svg width="863" height="22" viewBox="0 0 863 22" style={{ display: 'block' }}>
      {ticks}
      {[-50, 0, 50, 100].map(v => {
        const x = 179.5 + (v / 5) * rulerStep + 2;
        return <text key={v} x={x} y="13.500" fontSize="12.500" fill="#333" fontFamily="Noto Sans">{v}</text>;
      })}
      <line x1="321" x2="321" y1="0" y2="22" stroke="#b00000" strokeWidth="1.500" shapeRendering="crispEdges" />
      <line x1="0" x2="21" y1="21.500" y2="21.500" stroke="#8a1c1c" strokeWidth="1" />
    </svg>
  );
};
const VRuler = () => {
  const ticks = [];
  for (let i = -11; i < 64; i++) {
    const y = 94 + i * rulerStep;
    if (y < 0) continue;
    const major = i % 10 === 0;
    const mid = i % 5 === 0;
    ticks.push(<line key={i} x1={major ? 0 : mid ? 14 : 16} x2="21" y1={y} y2={y} stroke="#333" strokeWidth="1" shapeRendering="crispEdges" />);
  }
  return (
    <svg width="21" height="561" viewBox="0 0 21 561" style={{ display: 'block' }}>
      {ticks}
      {[-50, 0, 50, 100, 150, 200, 250].map(v => {
        const y = 94 + (v / 5) * rulerStep + 2;
        return <text key={v} transform={`translate(13 ${y}) rotate(-90)`} textAnchor="end" fontSize="12.500" fill="#333" fontFamily="Noto Sans">{v}</text>;
      })}
      <line x1="0" x2="0" y1="0" y2="561" stroke="#8c8c8c" />
    </svg>
  );
};

const LOREM = 'Lorem ipsum dolor sit amet, consectetuer adipiscing elit, sed diam nonummy nibh euismod tincidunt ut laoreet dolore magna aliquam erat volutpat. Ut wisi enim ad minim veniam, quis nostrud exerci tation ullamcorper suscipit lobortis nisl ut aliquip ex ea commodo consequat. Duis autem vel eum iriure dolor in hendrerit in vulputate velit esse molestie consequat, vel illum dolore eu feugiat nulla facilisis at vero eros et accumsan et iusto odio dignissim qui blandit praesent luptatum zzril delenit augue duis dolore te feugait nulla facilisi. ';

const Tool = ({ n, active }) => <ToolBtn $active={active}><I n={n} /></ToolBtn>;

const SpinArrows = ({ c }) => (
  <SpinBtns><UpCaret $s={4} $c={c} /><Caret $s={4} $c={c} /></SpinBtns>
);
const MarginSpin = () => (
  <Spin $w={99}><SpinText>3.53mm</SpinText><SpinArrows c="#666" /></Spin>
);
const Eps = () => <EpsBtn>ε</EpsBtn>;

export default function App() {
  return (
    <Desktop>
      <Global />
      <TopBar>
        <TopLeft>
          <Activities>Activities</Activities>
          <QgisIcon s={16} />
          <AppName>QGIS Desktop</AppName>
          <Caret $s={5} $c="#d8d8d4" $ml={6} />
        </TopLeft>
        <span>Sun Jan&nbsp;&nbsp;6,&nbsp;&nbsp;6:36:35 PM</span>
        <TopRight>
          <Tray $mr={30}><CamIcon /></Tray>
          <Tray $mr={12}><WifiIcon /></Tray>
          <Tray $mr={12}><SpeakerIcon /></Tray>
          <Tray $mr={9}><BatteryIcon /></Tray>
          <BatteryText>100 %</BatteryText>
          <Caret $s={4} $c="#d8d8d4" $ml={6} />
        </TopRight>
      </TopBar>
      <Row>
        <Dock>
          <DockItem><RunDot $t={29} /><Chrome /></DockItem>
          <DockItem><RunDot $t={29} /><FilesIcon /></DockItem>
          <DockItem><TerminalIcon /></DockItem>
          <DockItem><RunDot $t={29} /><AtomIcon /></DockItem>
          <DockItem><RunDot $t={24} /><RunDot $t={33} /><ActiveTile><QgisIcon /></ActiveTile></DockItem>
          <DockItem><BellIcon /></DockItem>
          <DockItem><RunDot $t={29} /><VideoIcon /></DockItem>
          <AppsGrid>{Array.from({ length: 9 }, (_, i) => <AppsDot key={i} />)}</AppsGrid>
        </Dock>
        <Window>
          <TitleBar>
            MithiRiver
            <WinControls>
              <WinBtn><svg width="8" height="2" aria-hidden="true"><rect width="8" height="1.200" fill="#2e2c28" /></svg></WinBtn>
              <WinBtn><svg width="8" height="7" aria-hidden="true"><rect x=".5" y=".5" width="7" height="6" fill="none" stroke="#2e2c28" /></svg></WinBtn>
              <WinBtn $close><WinCross /></WinBtn>
            </WinControls>
          </TitleBar>
          <MenuBar>
            <MenuItem><U>L</U>ayout</MenuItem>
            <MenuItem><U>E</U>dit</MenuItem>
            <MenuItem><U>V</U>iew</MenuItem>
            <MenuItem><U>I</U>tems</MenuItem>
            <MenuItem><U>A</U>dd Item</MenuItem>
            <MenuItem>Atlas</MenuItem>
            <MenuItem>Settings</MenuItem>
          </MenuBar>
          <ToolBar $h={39}>
            <Grip />
            <Tool n="save" />
            <Sep $l={4.5} $r={1.5} />
            <Tool n="newLayout" /><Tool n="dup" /><Tool n="manager" /><Tool n="open" /><Tool n="saveAs" />
            <Sep $l={4} $r={4} />
            <Tool n="page" />
            <Sep $l={1.5} $r={3.5} />
            <Tool n="print" /><Tool n="expImg" /><Tool n="expSvg" /><Tool n="expPdf" /><Tool n="undo" /><Tool n="redo" />
            <Grip $ml={7.5} $mr={2} />
            <Tool n="atlas" /><Tool n="first" /><Tool n="prev" />
            <PageCombo><PageComboText>1</PageComboText><PageComboArrow><Caret $c="#8a8a8a" /></PageComboArrow></PageCombo>
            <Tool n="next" /><Tool n="last" /><Tool n="printGray" /><Tool n="expAtlas" /><Tool n="atlasSet" active />
          </ToolBar>
          <ToolBar $h={38}>
            <Grip />
            <Tool n="zoomIn" /><Tool n="zoomOut" /><Tool n="zoom11" /><Tool n="zoomFull" /><Tool n="refresh" />
            <Grip $ml={8.5} $mr={2.5} />
            <Tool n="lock" /><Tool n="unlock" /><Tool n="select" /><Tool n="select2" /><Tool n="raise" /><Tool n="align" /><Tool n="distrib" /><Tool n="resize" />
          </ToolBar>
          <Main>
            <ToolColumn>
              <GripH />
              <ColBtn><I n="hand" /></ColBtn>
              <ColBtn><I n="zoomTool" /></ColBtn>
              <ColBtn $active><I n="selectTool" /></ColBtn>
              <ColBtn><I n="moveContent" /></ColBtn>
              <ColBtn><I n="editNodes" /></ColBtn>
              <ColBtn><I n="addMap" /></ColBtn>
              <ColBtn><I n="add3d" /></ColBtn>
              <ColBtn><I n="addPic" /></ColBtn>
              <ColBtn><I n="addLabel" /></ColBtn>
              <ColBtn><I n="addLegend" /></ColBtn>
              <ColBtn><I n="addScale" /></ColBtn>
              <ColBtn><I n="addShape" /></ColBtn>
              <ColBtn><I n="addArrow" /></ColBtn>
              <ColBtn><I n="addNode" /></ColBtn>
              <ColBtn><I n="addHtml" /></ColBtn>
              <ColBtn><I n="addTable" /></ColBtn>
            </ToolColumn>
            <CanvasArea>
              <RulerRow><HRuler /></RulerRow>
              <CanvasRow>
                <VRulerBox><VRuler /></VRulerBox>
                <View><Paper /></View>
              </CanvasRow>
            </CanvasArea>
            <Splitter><GripV /></Splitter>
            <RightPanel>
              <TabBar $h={29} $pl={1}>
                <Tab $w={62} $h={26}>Items</Tab>
                <Tab $w={114} $h={26} $active>Undo History</Tab>
              </TabBar>
              <DockTitle>
                Undo History
                <DockBtns><DockBtn><DockBtnFloat /></DockBtn><DockBtn><DockBtnClose /></DockBtn></DockBtns>
              </DockTitle>
              <ListBox>
                <ListRow>&lt;empty&gt;</ListRow>
                <ListRow $sel>Create Label</ListRow>
              </ListBox>
              <HSplit><GripTiny /></HSplit>
              <TabBar $h={26} $pl={2}>
                <Tab $w={70} $h={25}>Layout</Tab>
                <Tab $w={131} $h={25}>Item Properties</Tab>
                <Tab $w={71} $h={25}>Guides</Tab>
                <Tab $w={59} $h={26} $active>Atlas</Tab>
              </TabBar>
              <DockTitle>
                Atlas
                <DockBtns><DockBtn><DockBtnFloat /></DockBtn><DockBtn><DockBtnClose /></DockBtn></DockBtns>
              </DockTitle>
              <AtlasBox>
                <GenRow><Check />Generate an atlas</GenRow>
                <ScrollRow>
                  <ScrollContent>
                    <CollapseHead><Caret $s={6} $c="#5e5e5e" />Configuration</CollapseHead>
                    <CollapseGroup $h={168}>
                      <FormRow>
                        <RowLabel>Coverage layer</RowLabel>
                        <DisCombo $w={219}><DisComboFill /><DisComboArrow><Caret $c="#8a8a8a" /></DisComboArrow></DisCombo>
                      </FormRow>
                      <FormRow>
                        <RowLabel $w={300}><Check $dis />Hidden coverage layer</RowLabel>
                      </FormRow>
                      <FormRow>
                        <RowLabel>Page name</RowLabel>
                        <DisCombo $w={188} $dark><DisComboFill $line /><DisComboArrow><Caret $c="#8a8a8a" /></DisComboArrow></DisCombo>
                        <Eps />
                      </FormRow>
                      <FormRow>
                        <RowLabel><Check $dis />Filter with</RowLabel>
                        <DisCombo $w={188} $dark><DisComboFill /></DisCombo>
                        <Eps />
                      </FormRow>
                      <FormRow $mt={1}>
                        <RowLabel><Check $dis />Sort by</RowLabel>
                        <DisCombo $w={158} $dark><DisComboFill $line /><DisComboArrow><Caret $c="#8a8a8a" /></DisComboArrow></DisCombo>
                        <Eps />
                        <UpBtn $ml={6}><UpCaret $c="#8a8a8a" /></UpBtn>
                      </FormRow>
                    </CollapseGroup>
                    <CollapseHead><Caret $s={6} $c="#5e5e5e" />Output</CollapseHead>
                    <CollapseGroup $h={110} $pt={10}>
                      <FormRow $h={17}><span>Output filename expression</span></FormRow>
                      <FormRow>
                        <DisCombo $w={300} $dark><DisComboFill>'output_'||@atlas_featurenumber</DisComboFill></DisCombo>
                        <Eps />
                      </FormRow>
                      <FormRow>
                        <RowLabel $w={320}>
                          <Check $dis><svg width="10" height="10" viewBox="0 0 10 10" aria-hidden="true"><path d="M1.500 5l2.500 4L8.500 1" fill="none" stroke="#555" strokeWidth="1.300" /></svg></Check>
                          Single file export when possible
                        </RowLabel>
                      </FormRow>
                    </CollapseGroup>
                  </ScrollContent>
                  <ScrollBar>
                    <ScrollArrow><UpCaret $c="#444" /></ScrollArrow>
                    <ScrollThumb />
                    <ScrollTrack />
                    <ScrollArrow><Caret $c="#444" /></ScrollArrow>
                  </ScrollBar>
                </ScrollRow>
              </AtlasBox>
            </RightPanel>
          </Main>
          <StatusBar>
            <StatusText $w={839} $pl={733}>x: 80 mm</StatusText>
            <StatusText $w={106}>y: 0 mm</StatusText>
            <StatusText $w={106}>page: 1</StatusText>
            <ZoomCombo><ZoomText>46.8%</ZoomText><ZoomArrow><Caret $c="#3c3c3c" /></ZoomArrow></ZoomCombo>
            <Slider><SliderTrack /><SliderFill /><SliderKnob /></Slider>
          </StatusBar>
        </Window>
      </Row>

      <Dialog>
        <DialogTitle>
          Page Setup
          <DialogClose><WinCross c="#6b2208" /></DialogClose>
        </DialogTitle>
        <DialogBody>
          <LightCombo $w={144}>Millimeters (mm)<Caret /></LightCombo>
          <SecTitle $mt={9}>Paper</SecTitle>
          <GroupBox $w={414} $h={78} $pad="10px 10px 0 10px">
            <PaperRow $h={24} $mb={8}>
              <PLabel $w={74}>Page size:</PLabel>
              <LightCombo $w={277}>A4<Caret /></LightCombo>
            </PaperRow>
            <PaperRow $h={22}>
              <PLabel $w={74} $dis>Width:</PLabel>
              <Spin $w={107} $h={22} $dis><SpinText $left $dis>297.00mm</SpinText><SpinArrows c="#c8c8c8" /></Spin>
              <PLabel $w={62} $pl={6} $dis>Height:</PLabel>
              <Spin $w={108} $h={22} $dis><SpinText $left $dis>210.00mm</SpinText><SpinArrows c="#c8c8c8" /></Spin>
            </PaperRow>
          </GroupBox>
          <MiddleSplit>
            <LeftCol>
              <SecTitle $mt={9}>Orientation</SecTitle>
              <GroupBox $w={227} $h={74} $pad="6px 10px 0 10px">
                <RadioRow><Radio />Portrait</RadioRow>
                <RadioRow><Radio $on />Landscape</RadioRow>
              </GroupBox>
              <SecTitle $mt={9}>Margins</SecTitle>
              <GroupBox $w={227} $h={110} $pad="11px 11px 0 10px">
                <MarginRow><MarginSpin /></MarginRow>
                <MarginRow><MarginSpin /><MarginSpin /></MarginRow>
                <MarginRow><MarginSpin /></MarginRow>
              </GroupBox>
            </LeftCol>
            <PreviewWrap><PreviewInner>{LOREM + LOREM + LOREM.slice(0, 340)}</PreviewInner></PreviewWrap>
          </MiddleSplit>
          <DialogButtons>
            <PushBtn>
              <svg width="14" height="14" viewBox="0 0 14 14" aria-hidden="true"><path d="M2 1l5 4 5-4 1.500 2-4 4 4 4L12 13 7 9l-5 4-1.500-2 4-4-4-4z" fill="#666" /></svg>
              <span><U>C</U>ancel</span>
            </PushBtn>
            <PushBtn $def>
              <svg width="17" height="18" viewBox="0 0 17 18" aria-hidden="true"><path d="M1 10l2.500-2 3 4.500L14.500 0l2 1L7.500 17H6z" fill="#a8c84a" stroke="#7a9a2e" strokeWidth=".6" /></svg>
              <span><U>O</U>K</span>
            </PushBtn>
          </DialogButtons>
        </DialogBody>
      </Dialog>
    </Desktop>
  );
}
